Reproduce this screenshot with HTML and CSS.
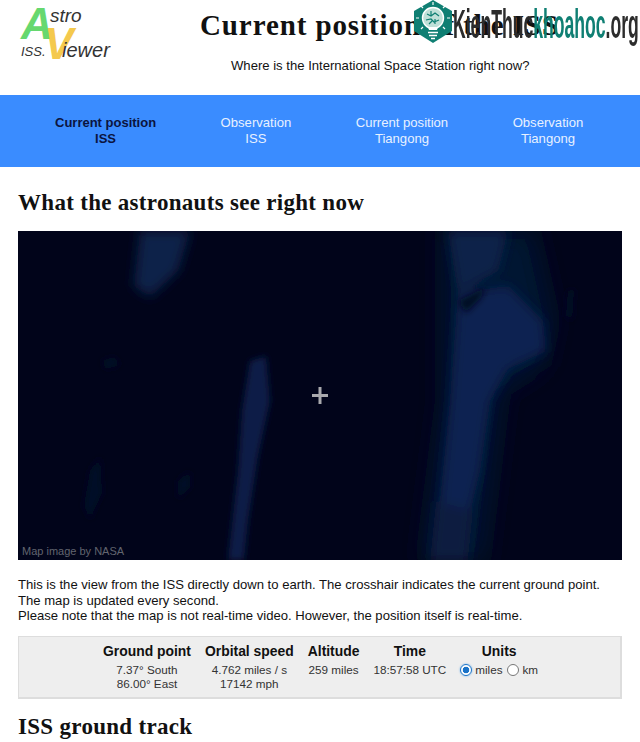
FILE: index.html

```html
<!DOCTYPE html>
<html lang="en">
<head>
  <meta charset="UTF-8" />
  <meta name="viewport" content="width=device-width, initial-scale=1.0" />
  <title>Current position of the ISS</title>
  <link rel="stylesheet" href="styles.css">
</head>
<body>
  <header class="top">
    <div class="logo">
      <span class="logo-a">A</span>
      <span class="logo-v">V</span>
      <span class="logo-stro">stro</span>
      <span class="logo-iss">ISS.</span>
      <span class="logo-iewer">iewer</span>
    </div>
    <div class="top-text">
      <h1>Current position of the ISS</h1>
      <p>Where is the International Space Station right now?</p>
    </div>
  </header>

  <!-- watermark sits over the title -->
  <div class="mark">
    <svg class="mark-icon" width="40" height="43" viewBox="0 0 40 43">
      <polygon points="20,0 39,11 39,31 20,43 1,31 1,11" fill="#0f7f73"/>
      <circle cx="20" cy="18" r="10.500" fill="#bfe0d8" stroke="#fff" stroke-width="1.400"/>
      <path d="M14 14l4 2 4-3 4 3M13 20l5-1 3 3 5-2M18 11v5M22 19v5M16 24l3-3" stroke="#0f7f73" stroke-width="1.200" fill="none"/>
      <path d="M15 27l1 3h8l1-3z" fill="#fff"/>
      <path d="M15 32.500h10M16 35.500h8M18 38.500h4" stroke="#fff" stroke-width="1.500"/>
      <path d="M20 2v3M3 18h3M34 18h3M8 6l2 2M32 6l-2 2M8 29l2-2M32 29l-2-2" stroke="#fff" stroke-width="1.200"/>
    </svg>
    <span class="mark-text"><span class="mark-dark">KienThuc</span><span class="mark-teal">khoahoc</span><span class="mark-dark">.org</span></span>
  </div>

  <nav class="menu">
    <a class="menu-item active" href="#">Current position<br>ISS</a>
    <a class="menu-item" href="#">Observation<br>ISS</a>
    <a class="menu-item" href="#">Current position<br>Tiangong</a>
    <a class="menu-item" href="#">Observation<br>Tiangong</a>
  </nav>

  <main class="content">
    <h2>What the astronauts see right now</h2>

    <div class="map">
      <svg class="map-img" width="604" height="329" viewBox="0 0 604 329" preserveAspectRatio="none">
        <defs>
          <filter id="soft" x="-30%" y="-30%" width="160%" height="160%"><feGaussianBlur stdDeviation="6"/></filter>
          <filter id="softer" x="-30%" y="-30%" width="160%" height="160%"><feGaussianBlur stdDeviation="3"/></filter>
          <filter id="wide" x="-30%" y="-30%" width="160%" height="160%"><feGaussianBlur stdDeviation="12"/></filter>
        </defs>
        <rect width="604" height="329" fill="#01041a"/>
        <g filter="url(#wide)">
          <path d="M425 0H515L535 90L525 135L485 160L465 329H405L425 170L425 60Z" fill="#061230"/>
        </g>
        <g filter="url(#soft)">
          <path d="M122 0H172L160 40L132 66L116 55Z" fill="#0c2049"/>
          <path d="M430 0H490L480 40L440 62Z" fill="#0c2049"/>
          <path d="M440 62L490 55L525 90L528 120L490 138L472 170L462 240L450 290L420 290L432 170Z" fill="#0e2351"/>
          <path d="M418 270L455 280L450 329H412Z" fill="#091a40"/>
        </g>
        <g filter="url(#softer)">
          <path d="M232 130L248 125L252 170L240 225L230 290L226 329H210L220 240L224 180Z" fill="#0a1d46"/>
          <path d="M72 240L82 226L84 262L72 288L66 275Z" fill="#050e28"/>
          <path d="M160 250L172 240L172 256L160 268Z" fill="#050e28"/>
          <path d="M84 130L96 126L102 134L88 138Z" fill="#050e28"/>
          <path d="M440 70L468 56L462 68L448 82Z" fill="#030a22"/>
          <path d="M550 60L556 58L554 90L548 85Z" fill="#050e28"/>
        </g>
      </svg>
      <svg class="crosshair" width="16" height="17" viewBox="0 0 16 17">
        <path d="M8 0V17M0 8.500H16" stroke="#a9a9ad" stroke-width="3"/>
      </svg>
      <span class="credit">Map image by NASA</span>
    </div>

    <p class="note">This is the view from the ISS directly down to earth. The crosshair indicates the current ground point.<br>
    The map is updated every second.<br>
    Please note that the map is not real-time video. However, the position itself is real-time.</p>

    <div class="stats">
      <div class="stat">
        <h3>Ground point</h3>
        <div>7.37° South<br>86.00° East</div>
      </div>
      <div class="stat">
        <h3>Orbital speed</h3>
        <div>4.762 miles / s<br>17142 mph</div>
      </div>
      <div class="stat">
        <h3>Altitude</h3>
        <div>259 miles</div>
      </div>
      <div class="stat">
        <h3>Time</h3>
        <div>18:57:58 UTC</div>
      </div>
      <div class="stat">
        <h3>Units</h3>
        <div class="units">
          <label><span class="radio on"></span>miles</label>
          <label><span class="radio"></span>km</label>
        </div>
      </div>
    </div>

    <h2 class="track">ISS ground track</h2>
  </main>
</body>
</html>
```

FILE: styles.css

```css
html, body {
  height: 742px;
  overflow: hidden;
}
body {
  margin: 0;
  font-family: "Liberation Sans", Arial, sans-serif;
  color: #111;
  background: #fff;
  position: relative;
}
.top {
  height: 95px;
  display: flex;
}
.logo {
  position: relative;
  width: 200px;
  flex: none;
}
.logo span {
  position: absolute;
  font-style: italic;
  color: #333;
}
.logo .logo-a {
  left: 21px;
  top: 0;
  font-size: 44px;
  line-height: 48px;
  font-weight: bold;
  color: #66d86f;
}
.logo .logo-v {
  left: 44px;
  top: 21px;
  font-size: 44px;
  line-height: 46px;
  font-weight: bold;
  color: #f4c94d;
}
.logo-stro {
  left: 50px;
  top: 5px;
  font-size: 19px;
  line-height: 22px;
}
.logo-iss {
  left: 21px;
  top: 44px;
  font-size: 13px;
  line-height: 15px;
}
.logo-iewer {
  left: 62px;
  top: 39px;
  font-size: 20px;
  line-height: 22px;
}
.top-text {
  flex: 1;
  min-width: 0;
}
.top-text h1 {
  margin: 8px 0 0;
  font-family: "Liberation Serif", serif;
  font-size: 29px;
  line-height: 34px;
  font-weight: bold;
  letter-spacing: .9px;
  white-space: nowrap;
}
.top-text p {
  margin: 15px 0 0 31px;
  font-size: 13.100px;
  line-height: 18px;
}
.mark {
  position: absolute;
  left: 413px;
  top: 0;
  display: flex;
}
.mark-text {
  position: absolute;
  left: 40px;
  top: 3px;
  font-family: "Liberation Sans", sans-serif;
  font-weight: bold;
  font-size: 40px;
  line-height: 42px;
  white-space: nowrap;
  transform: scaleX(.44);
  transform-origin: left top;
}
.mark-dark {
  color: #2c2c2c;
}
.mark-teal {
  color: #0f7f73;
}
.menu {
  height: 72px;
  background: #3a8cff;
  display: flex;
  gap: 64.500px;
  padding-left: 55px;
  align-items: center;
}
.menu-item {
  font-size: 13.100px;
  line-height: 16px;
  text-align: center;
  color: #e8f1ff;
  text-decoration: none;
}
.menu-item.active {
  font-weight: bold;
  font-size: 13px;
  color: #0b1440;
}
.content {
  padding: 0 18px;
}
.content h2 {
  margin: 23px 0 0;
  font-family: "Liberation Serif", serif;
  font-size: 23px;
  line-height: 26px;
  font-weight: bold;
  letter-spacing: .3px;
}
.map {
  position: relative;
  height: 329px;
  margin-top: 15px;
}
.map-img {
  display: block;
}
.crosshair {
  position: absolute;
  left: 294px;
  top: 156px;
}
.credit {
  position: absolute;
  left: 4px;
  bottom: 2px;
  font-size: 11px;
  line-height: 14px;
  color: #62656f;
}
.note {
  margin: 17px 0 0;
  font-size: 13.100px;
  line-height: 15.500px;
}
.stats {
  margin-top: 12px;
  height: 63px;
  box-sizing: border-box;
  background: #eee;
  border: 1px solid #ddd;
  border-width: 1px 2px 2px 1px;
  display: flex;
  padding-left: 84px;
  gap: 14px;
  font-size: 11.700px;
  line-height: 14px;
  color: #333;
  text-align: center;
}
.stat h3 {
  margin: 6px 0 3px;
  font-size: 13.900px;
  line-height: 17px;
  color: #111;
}
.units {
  display: flex;
  gap: 5px;
}
.units label {
  display: flex;
  align-items: center;
  gap: 3px;
}
.radio {
  width: 10px;
  height: 10px;
  border-radius: 50%;
  border: 1px solid #777;
  background: #fff;
}
.radio.on {
  border-color: #1a73c8;
  background: radial-gradient(circle, #1a73c8 3px, #fff 3.600px);
  box-shadow: 0 0 2px #5aa6e6;
}
.content .track {
  margin-top: 15px;
}
```
